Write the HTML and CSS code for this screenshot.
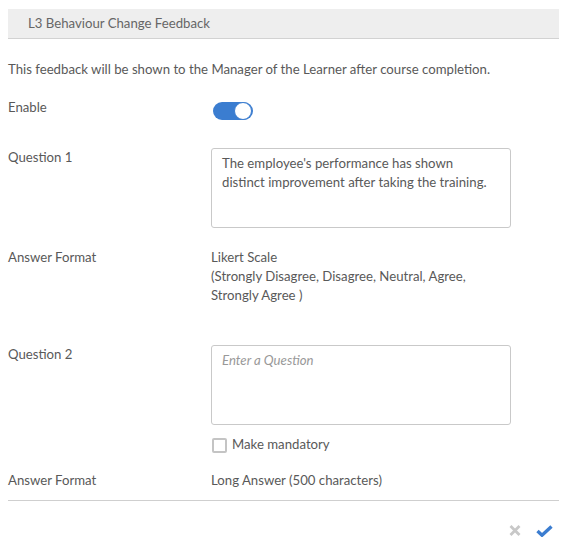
FILE: index.html
```html
<!DOCTYPE html>
<html>
<head>
<meta charset="utf-8">
<link rel="stylesheet" href="styles.css">
</head>
<body>
<div class="panel">
  <div class="header">L3 Behaviour Change Feedback</div>
  <p class="desc">This feedback will be shown to the Manager of the Learner after course completion.</p>

  <div class="row row-enable">
    <div class="label">Enable</div>
    <div class="value"><span class="toggle"><span class="knob"></span></span></div>
  </div>

  <div class="row row-q1">
    <div class="label">Question 1</div>
    <div class="value"><div class="textarea">The employee's performance has shown distinct improvement after taking the training.</div></div>
  </div>

  <div class="row row-af1">
    <div class="label">Answer Format</div>
    <div class="value">Likert Scale<br>(Strongly Disagree, Disagree, Neutral, Agree,<br>Strongly Agree )</div>
  </div>

  <div class="row row-q2">
    <div class="label">Question 2</div>
    <div class="value">
      <div class="textarea"><span class="placeholder">Enter a Question</span></div>
      <div class="mandatory"><span class="checkbox"></span><span>Make mandatory</span></div>
    </div>
  </div>

  <div class="row row-af2">
    <div class="label">Answer Format</div>
    <div class="value">Long Answer (500 characters)</div>
  </div>

  <div class="footer">
    <svg class="icon-x" width="12" height="13" viewBox="0 0 12 13"><path d="M1.5 2 L10.5 11 M10.5 2 L1.5 11" stroke="#c8c8c8" stroke-width="2.8" stroke-linecap="butt"/></svg>
    <svg class="icon-check" width="17" height="12" viewBox="0 0 17 12"><path d="M1.5 6 L6 10.2 L15.5 1.5" fill="none" stroke="#3b7dd0" stroke-width="3.4" stroke-linejoin="miter"/></svg>
  </div>
</div>
</body>
</html>
```

FILE: styles.css
```css
html, body {
  margin: 0;
  padding: 0;
  background: #fff;
}
body {
  padding: 8px;
  font-family: "Lato", "Liberation Sans", sans-serif;
  font-size: 13.2px;
  line-height: 19px;
  color: #595959;
}
.panel {
  width: 551px;
}
.header {
  height: 29px;
  line-height: 29px;
  background: #eeeeee;
  border-bottom: 1px solid #d2d2d2;
  padding-left: 20px;
  color: #666;
  margin-top: 1px;
}
.desc {
  margin: 21px 0 0 0;
}
.row {
  display: flex;
  align-items: flex-start;
}
.label {
  width: 203px;
  flex: none;
}
.value {
  flex: 1;
}
.row-enable { margin-top: 19px; }
.row-q1 { margin-top: 28px; }
.row-af1 { margin-top: 20px; }
.row-q2 { margin-top: 40px; }
.row-af2 { margin-top: 17px; }

.toggle {
  display: block;
  margin-top: 4px;
  margin-left: 2px;
  width: 40px;
  height: 18px;
  border-radius: 9px;
  background: #3b7dd0;
  position: relative;
}
.knob {
  position: absolute;
  right: 1px;
  top: 0;
  width: 16px;
  height: 16px;
  border-radius: 50%;
  background: #fff;
  border: 1px solid #3b7dd0;
}
.textarea {
  box-sizing: border-box;
  width: 300px;
  height: 80px;
  border: 1px solid #c9c9c9;
  border-radius: 3px;
  padding: 5px 16px 5px 10px;
  color: #595959;
}
.placeholder {
  font-style: italic;
  color: #999;
}
.mandatory {
  display: flex;
  align-items: center;
  margin-top: 10px;
  height: 19px;
}
.checkbox {
  box-sizing: border-box;
  width: 15px;
  height: 15px;
  border: 2px solid #c4c4c4;
  border-radius: 2px;
  margin-left: 1px;
  margin-right: 5px;
  margin-top: 2px;
}
.footer {
  margin-top: 10px;
  border-top: 1px solid #cfcfcf;
  display: flex;
  justify-content: flex-end;
  align-items: center;
  gap: 15px;
  padding: 23px 6px 0 0;
}
.icon-x, .icon-check {
  display: block;
}
```
